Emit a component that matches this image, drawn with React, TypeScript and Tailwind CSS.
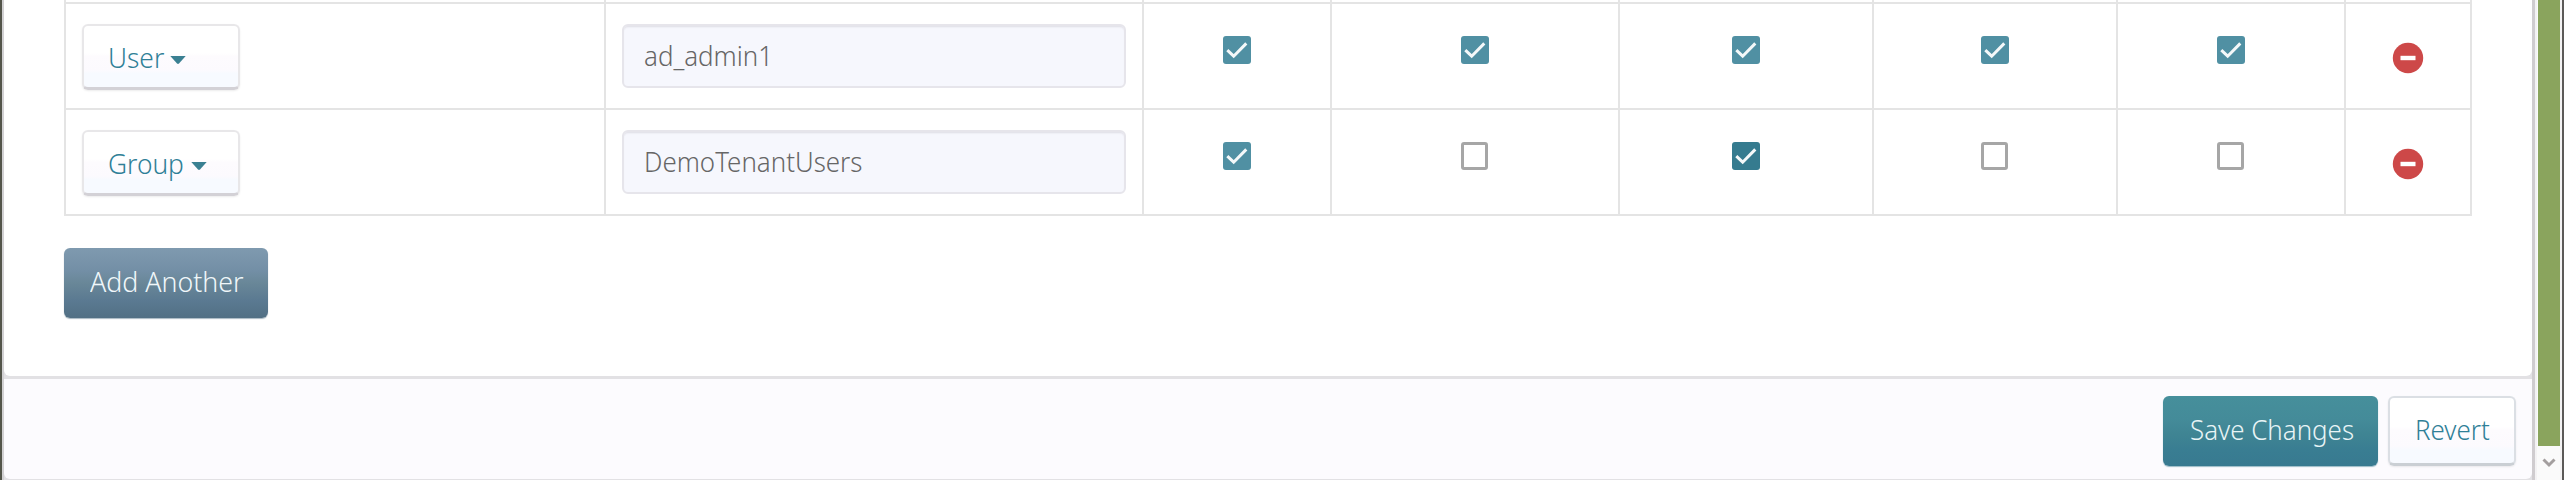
import type { ReactNode } from "react";

type Check = "on" | "off" | "strong";
type Entry = { kind: string; name: string; perms: Check[] };

const entries: Entry[] = [
  { kind: "User", name: "ad_admin1", perms: ["on", "on", "on", "on", "on"] },
  { kind: "Group", name: "DemoTenantUsers", perms: ["on", "off", "strong", "off", "off"] },
];

const columns = "grid grid-cols-[540px_538px_188px_288px_254px_244px_228px_126px]";

function Label({ children, scale = "scale-x-[0.925]" }: { children: ReactNode; scale?: string }) {
  return (
    <span className={`block origin-left whitespace-nowrap text-[28px] leading-[38px] font-light ${scale}`}>
      {children}
    </span>
  );
}

function Checkbox({ state }: { state: Check }) {
  if (state === "off") {
    return <span className="-ml-px block h-[28px] w-[27px] rounded-[3px] border-[3px] border-[#a6a6a6] bg-white" />;
  }
  return (
    <svg
      viewBox="0 0 28 28"
      className={`block h-7 w-7 rounded-[3px] ${state === "strong" ? "bg-[#357b8f]" : "bg-[#5090a3]"}`}
    >
      <path d="M4.3 14.2 L10.7 20.2 L23.3 7.4" fill="none" stroke="#f4f8f9" strokeWidth="3" />
    </svg>
  );
}

function RemoveIcon() {
  return (
    <svg viewBox="0 0 32 32" className="mr-px block h-8 w-8">
      <circle cx="16" cy="16" r="15.2" fill="#cd4848" />
      <rect x="8.5" y="13.8" width="15" height="4.4" fill="#fff" />
    </svg>
  );
}

function Cell({ children, className = "" }: { children?: ReactNode; className?: string }) {
  return <div className={`border-r-2 border-[#e4e4e4] ${className}`}>{children}</div>;
}

function Row({ entry }: { entry: Entry }) {
  return (
    <div className={`${columns} h-[106px] border-b-2 border-[#e4e4e4]`}>
      <Cell className="pt-5 pl-4">
        <button className="flex h-[66px] w-[158px] items-start rounded-[6px] border-2 border-b-[3px] border-[#e8e7e9] border-b-[#d3d1d6] bg-[linear-gradient(#ffffff_0%,#ffffff_44%,#fdfbfe_50%,#fcfafe_72%,#f7faff_78%,#f7faff_100%)] pt-[12px] pl-[24px] text-[#2f7f97] shadow-[0_1px_2px_#00000014]">
          <Label scale="scale-x-[0.94]">{entry.kind}</Label>
          <svg viewBox="0 0 16 8" className="mt-[18px] ml-[2px] h-2 w-4">
            <path d="M0.3 0 H15.7 L9 7.5 Q8 8.4 7 7.5 Z" fill="#3a8092" />
          </svg>
        </button>
      </Cell>
      <Cell className="pt-5 pl-4">
        <div className="h-[64px] w-[504px] rounded-[6px] border-2 border-[#e6e5eb] bg-[#f6f7fd] pt-[10px] pl-5 text-[#666666] shadow-[inset_0_2px_2px_-1px_#dedde4]">
          <Label>{entry.name}</Label>
        </div>
      </Cell>
      {entry.perms.map((state, i) => (
        <Cell key={i} className="flex justify-center pt-8">
          <Checkbox state={state} />
        </Cell>
      ))}
      <Cell className="flex justify-center pt-[38px]">
        <RemoveIcon />
      </Cell>
    </div>
  );
}

export default function App() {
  return (
    <div className="flex h-[480px] w-[2564px] overflow-hidden bg-white font-['Noto_Sans','Open_Sans',sans-serif]">
      <div className="w-[2px] bg-[#53554a]" />
      <div className="w-[2px] bg-[#d2d1d3]" />

      <main className="flex w-[2528px] flex-col bg-[#e2e1e4]">
        <section className="h-[372px] rounded-b-[6px] bg-white pl-[60px] pb-1 box-content">
          <div className="w-[2408px] border-l-2 border-[#e4e4e4]">
            <div className={`${columns} h-1 border-b-2 border-[#e4e4e4]`}>
              {Array.from({ length: 8 }, (_, i) => (
                <Cell key={i} />
              ))}
            </div>
            {entries.map((entry) => (
              <Row key={entry.name} entry={entry} />
            ))}
          </div>
          <button className="mt-8 flex h-[70px] w-[204px] items-start rounded-[6px] bg-[linear-gradient(#7f9aaf_0%,#738fa6_32%,#698798_50%,#5a7991_76%,#527084_100%)] pt-[14px] pl-[26px] text-[#f0f7fa] shadow-[0_1px_1px_#52708480]">
            <Label scale="scale-x-[0.955]">Add Another</Label>
          </button>
        </section>

        <footer className="mt-[3px] flex h-[100px] justify-end gap-2.5 rounded-b-[6px] bg-[#fcfbfe] pt-[17px] pr-4">
          <button className="flex h-[70px] w-[215px] items-start rounded-[6px] bg-[linear-gradient(#468f9b_0%,#448b99_34%,#3f8493_55%,#397d92_78%,#387a90_100%)] pt-[14px] pl-[27px] text-[#e8f4f6] shadow-[0_1px_1px_#387a9080]">
            <Label>Save Changes</Label>
          </button>
          <button className="flex h-[70px] w-[128px] items-start rounded-[6px] border-2 border-b-[3px] border-[#dbdfe4] border-b-[#cacfd4] bg-[linear-gradient(#ffffff_0%,#ffffff_44%,#fdfbfe_50%,#fcfafe_74%,#f7faff_80%,#f7faff_100%)] pt-[12px] pl-[25px] text-[#2f7f97] shadow-[0_1px_2px_#00000014]">
            <Label>Revert</Label>
          </button>
        </footer>
      </main>

      <div className="w-[3px] bg-[#cfcccf]" />
      <div className="flex w-[27px] flex-col border-x-2 border-[#f3f2f3] bg-[#fafafa] pl-[1px]">
        <div className="h-[446px] w-[22px] bg-[#8aa45d]" />
        <svg viewBox="0 0 22 34" className="h-[34px] w-[22px]">
          <path d="M5.5 13.5 L11 19 L16.5 13.5" fill="none" stroke="#a39e9e" strokeWidth="3" />
        </svg>
      </div>
      <div className="w-[2px] bg-[#5c5a58]" />
    </div>
  );
}
